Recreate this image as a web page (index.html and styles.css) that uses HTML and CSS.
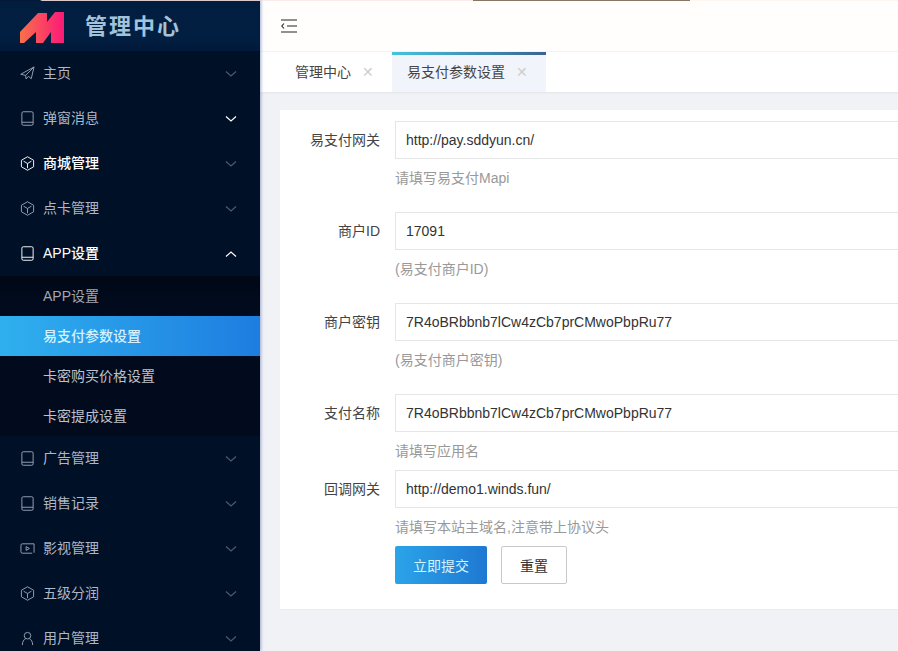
FILE: index.html
```html
<!DOCTYPE html>
<html lang="en">
<head>
    <meta charset="UTF-8">
    <meta name="viewport" content="width=device-width, initial-scale=1.0">
    <title>易支付参数设置</title>
    <link rel="stylesheet" href="styles.css">
</head>
<body>
    <svg class="icon-defs" width="0" height="0">
        <symbol id="i-send" viewBox="0 0 16 16">
            <path d="M15 1 .8 8.800 6 10l.5 3.800L9 11l3 2.500zM15 1 6 10"/>
        </symbol>
        <symbol id="i-phone" viewBox="0 0 16 16">
            <rect x="2" y=".8" width="12" height="14.400" rx="1.500"/>
            <path d="M2 12h12"/>
        </symbol>
        <symbol id="i-cube" viewBox="0 0 16 16">
            <path d="M8 .8 14.500 4.500v7L8 15.200 1.500 11.500v-7z"/>
            <path d="M3.800 5.500 8 8l4.200-2.500M8 8v5"/>
        </symbol>
        <symbol id="i-video" viewBox="0 0 16 16">
            <path d="M15 12.500V3H2.500A1.500 1.500 0 0 0 1 4.500v7A1.500 1.500 0 0 0 2.500 13H13"/>
            <path d="M6.500 6v4l3.500-2z"/>
        </symbol>
        <symbol id="i-user" viewBox="0 0 16 16">
            <circle cx="8" cy="5" r="3.500"/>
            <path d="M2.500 15c0-3.500 1.500-6 3.500-6.800M13.500 15c0-3.500-1.500-6-3.500-6.800"/>
        </symbol>
        <symbol id="i-down" viewBox="0 0 12 8">
            <path d="M1 1.500 6 6l5-4.500"/>
        </symbol>
        <symbol id="i-up" viewBox="0 0 12 8">
            <path d="M1 6.500 6 2l5 4.500"/>
        </symbol>
    </svg>

    <div class="page">
        <aside class="sidebar">
            <div class="side-strip"></div>
            <div class="brand">
                <svg class="logo" viewBox="0 0 44 32">
                    <defs>
                        <linearGradient id="logo-grad" x1="0" y1="0" x2="1" y2="0">
                            <stop offset="0" stop-color="#f8704a"/>
                            <stop offset="1" stop-color="#fb1a78"/>
                        </linearGradient>
                    </defs>
                    <polygon fill="url(#logo-grad)" points="0,20 18,1 27,1 27,10 35,0 44,0 44,31 31,31 31,20 23,31 16,31 16,20 4,31 0,31"/>
                </svg>
                <span class="brand-name">管理中心</span>
            </div>
            <nav>
                <a class="nav-item"><svg class="nav-icon"><use href="#i-send"/></svg><span class="nav-text">主页</span><svg class="chevron"><use href="#i-down"/></svg></a>
                <a class="nav-item chevron-on"><svg class="nav-icon"><use href="#i-phone"/></svg><span class="nav-text">弹窗消息</span><svg class="chevron"><use href="#i-down"/></svg></a>
                <a class="nav-item bright"><svg class="nav-icon"><use href="#i-cube"/></svg><span class="nav-text">商城管理</span><svg class="chevron"><use href="#i-down"/></svg></a>
                <a class="nav-item"><svg class="nav-icon"><use href="#i-cube"/></svg><span class="nav-text">点卡管理</span><svg class="chevron"><use href="#i-down"/></svg></a>
                <a class="nav-item bright chevron-on"><svg class="nav-icon"><use href="#i-phone"/></svg><span class="nav-text">APP设置</span><svg class="chevron"><use href="#i-up"/></svg></a>
                <div class="sub-nav">
                    <a class="sub-item dim">APP设置</a>
                    <a class="sub-item active">易支付参数设置</a>
                    <a class="sub-item">卡密购买价格设置</a>
                    <a class="sub-item">卡密提成设置</a>
                </div>
                <a class="nav-item"><svg class="nav-icon"><use href="#i-phone"/></svg><span class="nav-text">广告管理</span><svg class="chevron"><use href="#i-down"/></svg></a>
                <a class="nav-item"><svg class="nav-icon"><use href="#i-phone"/></svg><span class="nav-text">销售记录</span><svg class="chevron"><use href="#i-down"/></svg></a>
                <a class="nav-item"><svg class="nav-icon"><use href="#i-video"/></svg><span class="nav-text">影视管理</span><svg class="chevron"><use href="#i-down"/></svg></a>
                <a class="nav-item"><svg class="nav-icon"><use href="#i-cube"/></svg><span class="nav-text">五级分润</span><svg class="chevron"><use href="#i-down"/></svg></a>
                <a class="nav-item"><svg class="nav-icon"><use href="#i-user"/></svg><span class="nav-text">用户管理</span><svg class="chevron"><use href="#i-down"/></svg></a>
            </nav>
        </aside>

        <main class="main">
            <div class="top-strip"></div>
            <div class="topbar">
                <svg class="menu-toggle" viewBox="0 0 16 14">
                    <path d="M0 1h16M6 7h10M0 13h16M3 4.500 .8 7 3 9.500"/>
                </svg>
            </div>
            <div class="tabs">
                <div class="tab">管理中心<span class="tab-close">✕</span></div>
                <div class="tab current">易支付参数设置<span class="tab-close">✕</span></div>
            </div>
            <div class="content">
                <form class="card">
                    <div class="form-row">
                        <label class="form-label">易支付网关</label>
                        <div class="form-field">
                            <input class="form-input" value="http://pay.sddyun.cn/">
                            <div class="form-help">请填写易支付Mapi</div>
                        </div>
                    </div>
                    <div class="form-row">
                        <label class="form-label">商户ID</label>
                        <div class="form-field">
                            <input class="form-input" value="17091">
                            <div class="form-help">(易支付商户ID)</div>
                        </div>
                    </div>
                    <div class="form-row">
                        <label class="form-label">商户密钥</label>
                        <div class="form-field">
                            <input class="form-input" value="7R4oBRbbnb7lCw4zCb7prCMwoPbpRu77">
                            <div class="form-help">(易支付商户密钥)</div>
                        </div>
                    </div>
                    <div class="form-row tight">
                        <label class="form-label">支付名称</label>
                        <div class="form-field">
                            <input class="form-input" value="7R4oBRbbnb7lCw4zCb7prCMwoPbpRu77">
                            <div class="form-help">请填写应用名</div>
                        </div>
                    </div>
                    <div class="form-row tight">
                        <label class="form-label">回调网关</label>
                        <div class="form-field">
                            <input class="form-input" value="http://demo1.winds.fun/">
                            <div class="form-help">请填写本站主域名,注意带上协议头</div>
                        </div>
                    </div>
                    <div class="form-actions">
                        <button class="btn btn-primary" type="button">立即提交</button>
                        <button class="btn btn-reset" type="button">重置</button>
                    </div>
                </form>
            </div>
        </main>
    </div>
</body>
</html>
```

FILE: styles.css
```css
body {
    margin: 0;
    font-family: "Liberation Sans", "Noto Sans CJK SC", sans-serif;
    font-size: 14px;
    color: #333;
    overflow: hidden;
}
.icon-defs {
    display: none;
}
.page {
    display: flex;
    height: 651px;
    overflow: hidden;
}

/* sidebar */
.sidebar {
    position: relative;
    z-index: 1;
    flex: none;
    width: 260px;
    height: 651px;
    overflow: hidden;
    background: #001027;
    box-shadow: 1px 0 3px rgba(90, 110, 160, 0.55);
}
.side-strip {
    height: 1px;
    background: linear-gradient(to right, #02183a 40px, #d9c8cc 42px);
}
.brand {
    display: flex;
    align-items: center;
    height: 50px;
    padding-left: 20px;
    background: linear-gradient(to bottom, #021d3e, #011f42 70%, #01193a);
}
.logo {
    width: 44px;
    height: 32px;
    margin-top: 3px;
}
.brand-name {
    margin: 2px 0 0 21px;
    font-size: 22px;
    line-height: 28px;
    font-weight: bold;
    letter-spacing: 2px;
    color: #a3c3da;
}
.nav-item {
    display: flex;
    align-items: center;
    height: 45px;
    padding-left: 20px;
    line-height: 20px;
    color: #aeb7c6;
}
.nav-icon {
    flex: none;
    width: 15px;
    height: 15px;
    margin-right: 8px;
    fill: none;
    stroke: #9aa5b6;
    stroke-width: 1;
}
.nav-text {
    flex: 1;
    margin-bottom: 1px;
}
.chevron {
    flex: none;
    width: 12px;
    height: 8px;
    margin-right: 23px;
    fill: none;
    stroke: #4c5a72;
    stroke-width: 1.200;
}
.nav-item.bright {
    color: #fff;
}
.nav-item.bright .nav-text {
    font-weight: 500;
}
.nav-item.bright .nav-icon {
    stroke: #fff;
}
.chevron-on .chevron {
    stroke: #fff;
}
.sub-nav {
    background: linear-gradient(to bottom, #000815, #020b1e 30px);
}
.sub-item {
    display: block;
    height: 40px;
    line-height: 40px;
    padding-left: 43px;
    color: #bcc2cd;
}
.sub-item.dim {
    color: #a0a7b3;
}
.sub-item.active {
    color: #d5f1ff;
    font-weight: 500;
    background: linear-gradient(to right, #2fb0ee, #1e7de0);
}

/* main area */
.main {
    flex: 1;
    min-width: 0;
    display: flex;
    flex-direction: column;
    background: #f1f2f6;
}
.top-strip {
    flex: none;
    height: 1px;
    background: linear-gradient(to right, #fbecec 213px, #8a7563 213px, #8a7563 430px, #fdf5ee 430px);
}
.topbar {
    flex: none;
    display: flex;
    align-items: center;
    height: 50px;
    padding-left: 21px;
    background: #fffefd;
    border-bottom: 1px solid #f4f4f4;
}
.menu-toggle {
    width: 16px;
    height: 14px;
    fill: none;
    stroke: #222;
    stroke-width: 1.100;
}
.tabs {
    flex: none;
    display: flex;
    height: 40px;
    background: #fff;
    box-shadow: 0 1px 2px rgba(0, 0, 0, 0.06);
}
.tab {
    display: flex;
    align-items: center;
    height: 40px;
    padding: 0 18px 0 35px;
    line-height: 20px;
    color: #444;
}
.tab.current {
    padding-left: 15px;
    background: linear-gradient(to right, #45c4dc, #3b6392) top / 100% 3px no-repeat, #f1f4fb;
}
.tab-close {
    margin-left: 11px;
    width: 12px;
    font-size: 14px;
    color: #cdcdcd;
}
.content {
    flex: 1;
    padding: 18px 0 0 20px;
    overflow: hidden;
}
.card {
    width: 700px;
    height: 500px;
    box-sizing: border-box;
    padding-top: 11px;
    background: #fff;
    border-bottom: 1px solid #ececec;
}

/* form */
.form-row {
    display: flex;
    margin-bottom: 25px;
}
.form-row.tight {
    margin-bottom: 10px;
}
.form-label {
    flex: none;
    width: 100px;
    margin-right: 15px;
    line-height: 38px;
    text-align: right;
    color: #444;
}
.form-field {
    flex: 1;
    min-width: 0;
}
.form-input {
    display: block;
    width: 100%;
    height: 38px;
    box-sizing: border-box;
    padding: 0 10px;
    border: 1px solid #e6e6e6;
    outline: none;
    font: inherit;
    color: #333;
    background: #fff;
}
.form-help {
    margin-top: 10px;
    line-height: 18px;
    color: #999;
}
.form-actions {
    display: flex;
    gap: 14px;
    margin-left: 115px;
}
.btn {
    height: 38px;
    padding: 0;
    font: inherit;
    border-radius: 2px;
}
.btn-primary {
    width: 92px;
    border: none;
    color: #d5f3ff;
    background: linear-gradient(to right, #2ba4e9, #1e78d2);
}
.btn-reset {
    width: 66px;
    border: 1px solid #c9c9c9;
    color: #333;
    background: #fff;
}
```
